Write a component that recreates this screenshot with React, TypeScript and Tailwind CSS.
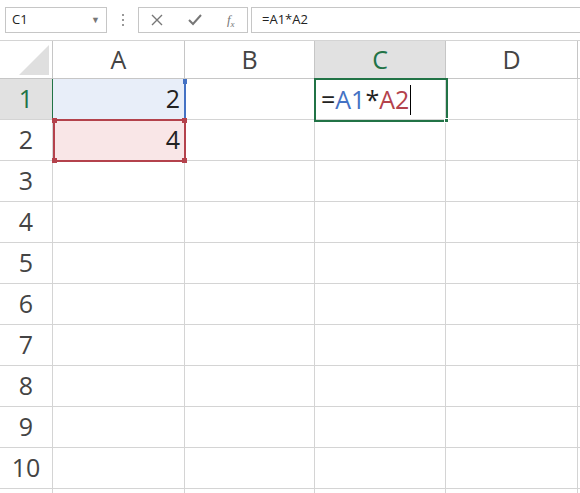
import React from "react";

const cols = ["A", "B", "C", "D"];
const widths = [132, 130, 131, 132];
const font = { fontFamily: '"Open Sans", "Noto Sans", sans-serif' };

export default function App() {
  return (
    <div className="relative h-[493px] w-[580px] overflow-hidden bg-white text-[#222]" style={font}>
      {/* formula bar */}
      <div className="flex h-[41px] items-center gap-0 border-b border-[#d4d4d4] bg-white pl-[5px]">
        <div className="flex h-[26px] w-[102px] items-center justify-between border border-[#c6c6c6] px-[6px] text-[13px]">
          <span>C1</span>
          <span className="text-[9px] text-[#777]">▼</span>
        </div>
        <div className="flex w-[31px] flex-col items-center gap-[3px]">
          <span className="h-[2px] w-[2px] bg-[#999]" />
          <span className="h-[2px] w-[2px] bg-[#999]" />
          <span className="h-[2px] w-[2px] bg-[#999]" />
        </div>
        <div className="flex h-[26px] w-[110px] items-center justify-around border border-[#c6c6c6] text-[#777]">
          <svg width="12" height="12" viewBox="0 0 12 12"><path d="M1 1L11 11M11 1L1 11" stroke="#777" strokeWidth="1.4" /></svg>
          <svg width="14" height="12" viewBox="0 0 14 12"><path d="M1 6L5 10L13 1" stroke="#777" strokeWidth="2" fill="none" /></svg>
          <span className="text-[13px] italic" style={{ fontFamily: '"Liberation Serif", serif' }}>f<sub className="text-[9px]">x</sub></span>
        </div>
        <div className="ml-[3px] flex h-[26px] flex-1 items-center border-y border-l border-[#c6c6c6] px-[10px] text-[13px]">
          =A1*A2
        </div>
      </div>

      {/* grid */}
      <div className="grid" style={{ gridTemplateColumns: `53px ${widths.map((w) => w + "px").join(" ")} 20px`, gridTemplateRows: "38px repeat(11, 41px)" }}>
        <div className="relative border-r border-b border-[#c6c6c6] bg-white">
          <div className="absolute right-[3px] bottom-[3px] h-0 w-0" style={{ borderBottom: "30px solid #dfdfdf", borderLeft: "30px solid transparent" }} />
        </div>
        {cols.map((c) => (
          <div key={c} className={`flex items-center justify-center border-r border-b border-[#c6c6c6] text-[25px] ${c === "C" ? "bg-[#e1e1e1] text-[#217346] border-b-[#217346]" : "bg-white text-[#444]"}`}>
            {c}
          </div>
        ))}
        <div className="border-b border-[#c6c6c6]" />
        {Array.from({ length: 11 }, (_, r) => (
          <React.Fragment key={r}>
            <div className={`flex items-center justify-center border-r border-b border-[#d4d4d4] text-[25px] ${r === 0 ? "bg-[#e1e1e1] text-[#217346] border-r-[#217346]" : "text-[#444]"}`}>
              {r < 10 ? r + 1 : ""}
            </div>
            {cols.map((c, ci) => (
              <div key={c} className={`flex items-center border-r border-b border-[#d4d4d4] text-[25px] ${r === 0 && ci === 0 ? "bg-[#e8eef9] justify-end pr-[4px]" : ""} ${r === 1 && ci === 0 ? "bg-[#f9e6e7] justify-end pr-[4px]" : ""}`}>
                {r === 0 && ci === 0 ? "2" : r === 1 && ci === 0 ? "4" : ""}
              </div>
            ))}
            <div className="border-b border-[#d4d4d4]" />
          </React.Fragment>
        ))}
      </div>

      {/* reference highlights */}
      <div className="pointer-events-none absolute left-[52px] top-[79px] h-[42px] w-[134px] border-r-2 border-[#4472c4]" />
      <div className="pointer-events-none absolute left-[53px] top-[119px] h-[43px] w-[133px] border-2 border-[#b4424c]">
        <span className="absolute -left-[3px] -top-[3px] h-[5px] w-[5px] bg-[#b4424c]" />
        <span className="absolute -right-[3px] -top-[3px] h-[5px] w-[5px] bg-[#b4424c]" />
        <span className="absolute -left-[3px] -bottom-[3px] h-[5px] w-[5px] bg-[#b4424c]" />
        <span className="absolute -right-[3px] -bottom-[3px] h-[5px] w-[5px] bg-[#b4424c]" />
      </div>
      <span className="absolute left-[183px] top-[79px] h-[5px] w-[4px] bg-[#4472c4]" />
      {/* active cell */}
      <div className="absolute left-[314px] top-[78px] flex h-[44px] w-[134px] items-center border-2 border-[#217346] pl-[5px] text-[25px]">
        <span>=</span>
        <span className="text-[#4472c4]">A1</span>
        <span>*</span>
        <span className="text-[#b4424c]">A2</span>
        <span className="ml-[1px] h-[30px] w-px bg-black" />
        <span className="absolute -right-[3px] -bottom-[3px] h-[5px] w-[5px] border border-white bg-[#217346]" />
      </div>
    </div>
  );
}
